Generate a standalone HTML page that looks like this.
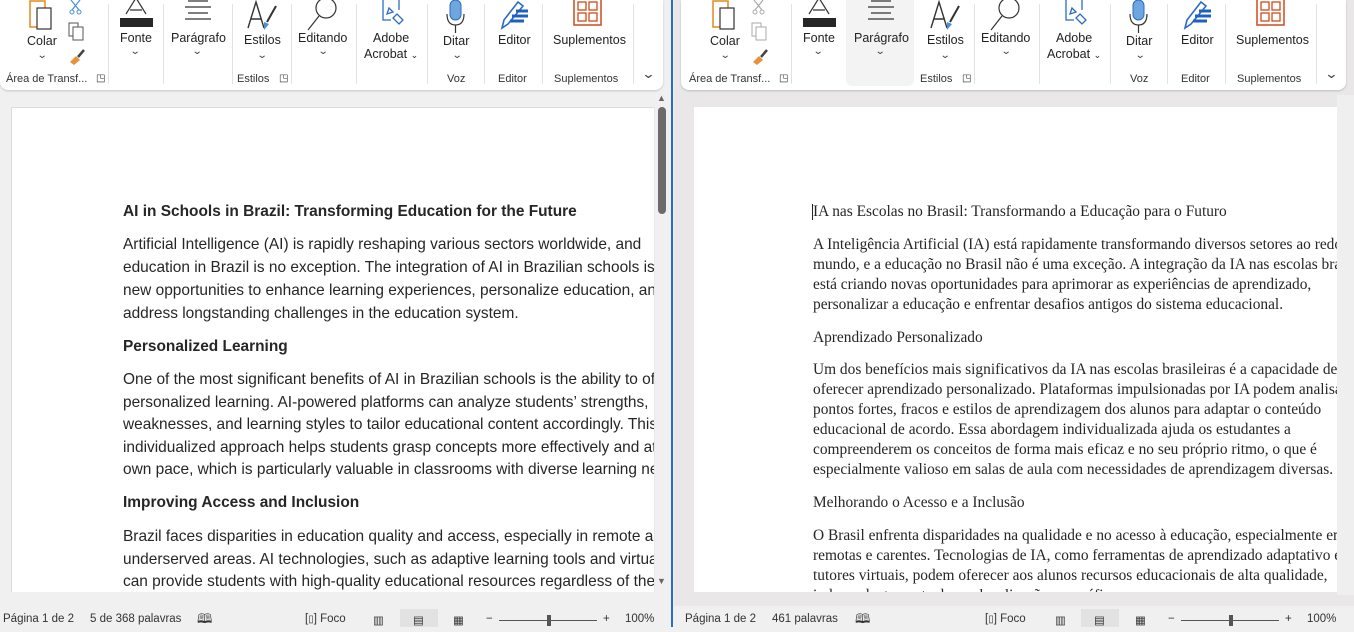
<!DOCTYPE html>
<html><head><meta charset="utf-8"><style>
*{margin:0;padding:0;box-sizing:border-box}
body{width:1354px;height:627px;overflow:hidden;position:relative;background:#f0f0f0;font-family:"Liberation Sans",sans-serif;color:#222}
.abs{position:absolute}
.rib{position:absolute;top:0;height:90px;background:#fff;border-radius:0 0 8px 8px;box-shadow:0 1px 2px rgba(0,0,0,.18)}
.lbl{position:absolute;font-size:12.5px;color:#222;white-space:nowrap}
.grp{position:absolute;font-size:11px;color:#333;top:73px;white-space:nowrap}
.sep{position:absolute;top:4px;width:1px;height:80px;background:#e2e2e2}
.chev{position:absolute;font-size:10px;color:#444;transform:scaleX(1.3)}
.page{position:absolute;top:107px;height:485px;background:#fff;overflow:hidden}
.l{position:absolute;white-space:nowrap}
.lp .l{font-family:"Liberation Sans",sans-serif;font-size:15.45px;color:#262626}
.rp .l{font-family:"Liberation Serif",serif;font-size:15.4px;color:#262626}
.st{position:absolute;top:613px;font-size:11.5px;color:#333;white-space:nowrap}
</style></head><body>
<div class="abs" style="left:674px;top:0;width:680px;height:627px;background:#e9e7e7"></div>
<div class="abs" style="left:1337px;top:95px;width:17px;height:500px;background:#efefef"></div>
<div class="abs" style="left:671px;top:0;width:2px;height:627px;background:#2b6cc4"></div>

<!-- LEFT RIBBON -->
<div class="rib" style="left:0;width:663px"></div>
<div class="abs" style="left:0;top:0;width:663px;height:90px">
 <svg class="abs" style="left:28px;top:0" width="26" height="32"><rect x="2" y="1" width="15" height="26" fill="#fff" stroke="#e08a1e" stroke-width="1.5"/><rect x="9" y="8" width="14" height="21" fill="#fff" stroke="#333" stroke-width="1.2"/></svg>
 <div class="lbl" style="left:27px;top:34px">Colar</div><div class="chev" style="left:38px;top:50px">⌄</div>
 <svg class="abs" style="left:68px;top:0" width="16" height="16"><path d="M3 0 L11 10 M12 0 L4 10" stroke="#4a90d9" stroke-width="1.2" fill="none"/><circle cx="4" cy="12" r="2" stroke="#4a90d9" fill="none"/><circle cx="11" cy="12" r="2" stroke="#4a90d9" fill="none"/></svg>
 <svg class="abs" style="left:68px;top:22px" width="18" height="20"><rect x="1" y="1" width="9" height="13" fill="#fff" stroke="#555"/><rect x="5" y="5" width="10" height="13" fill="#fff" stroke="#555"/></svg>
 <svg class="abs" style="left:68px;top:47px" width="20" height="20"><path d="M2 15 L8 9 L12 13 L6 18Z" fill="#e8913a"/><path d="M10 10 L16 3" stroke="#444" stroke-width="2.5"/></svg>
 <div class="grp" style="left:6px">Área de Transf...</div><div class="grp" style="left:96px;font-size:10px">◳</div>
 <div class="sep" style="left:108px"></div>
 <svg class="abs" style="left:119px;top:0" width="36" height="27"><path d="M7 14 L17 -2 L27 14 M11 10 H23" stroke="#333" fill="none" stroke-width="1.2"/><rect x="1" y="18" width="33" height="9" fill="#262626"/></svg>
 <div class="lbl" style="left:120px;top:31px">Fonte</div><div class="chev" style="left:131px;top:46px">⌄</div>
 <div class="sep" style="left:163px"></div>
 <svg class="abs" style="left:183px;top:0" width="30" height="22"><path d="M5 1H25M2 7H28M5 13H25M2 19H28" stroke="#333" stroke-width="1.2"/></svg>
 <div class="lbl" style="left:171px;top:31px">Parágrafo</div><div class="chev" style="left:193px;top:46px">⌄</div>
 <div class="sep" style="left:232px"></div>
 <svg class="abs" style="left:246px;top:0" width="34" height="32"><path d="M2 28 L10 2 L18 28 M5 19 H15" stroke="#333" fill="none" stroke-width="1.4"/><path d="M30 6 L21 22" stroke="#333" stroke-width="2"/><path d="M18 22 L23 24 L18 30Z" fill="#4a90d9"/></svg>
 <div class="lbl" style="left:244px;top:33px">Estilos</div><div class="chev" style="left:258px;top:50px">⌄</div>
 <div class="grp" style="left:237px">Estilos</div><div class="grp" style="left:279px;font-size:10px">◳</div>
 <div class="sep" style="left:291px"></div>
 <svg class="abs" style="left:306px;top:0" width="34" height="32"><circle cx="20" cy="8" r="10" fill="none" stroke="#333" stroke-width="1.2"/><path d="M13 16 L2 30" stroke="#333" stroke-width="1.2"/></svg>
 <div class="lbl" style="left:298px;top:31px">Editando</div><div class="chev" style="left:319px;top:46px">⌄</div>
 <div class="sep" style="left:356px"></div>
 <svg class="abs" style="left:379px;top:0" width="28" height="32"><path d="M4 0 V20 H12 M20 0 V10" stroke="#2b6cc4" fill="none" stroke-width="1.3"/><path d="M10 8 L14 12 L8 14Z M14 18 l6 6 l4 -4 l-6 -6z" stroke="#2b6cc4" fill="none" stroke-width="1.3"/></svg>
 <div class="lbl" style="left:373px;top:31px">Adobe</div>
 <div class="lbl" style="left:364px;top:47px">Acrobat <span style="font-size:9px">⌄</span></div>
 <div class="sep" style="left:427px"></div>
 <svg class="abs" style="left:445px;top:0" width="22" height="34"><rect x="5" y="0" width="11" height="20" rx="5.5" fill="#6ea6e0" stroke="#2b6cc4"/><path d="M2 14 Q2 25 10.5 25 Q19 25 19 14 M10.5 25 V33" stroke="#333" fill="none" stroke-width="1.2"/></svg>
 <div class="lbl" style="left:443px;top:34px">Ditar</div><div class="chev" style="left:453px;top:50px">⌄</div>
 <div class="grp" style="left:447px">Voz</div>
 <div class="sep" style="left:484px"></div>
 <svg class="abs" style="left:498px;top:0" width="32" height="30"><path d="M4 28 L6 20 L20 2 L25 6 L10 24Z" stroke="#2b6cc4" fill="none" stroke-width="1.6"/><path d="M14 16 H30 M18 11 H30 M12 21 H26" stroke="#1f5fbf" stroke-width="3"/></svg>
 <div class="lbl" style="left:498px;top:33px">Editor</div>
 <div class="grp" style="left:498px">Editor</div>
 <div class="sep" style="left:542px"></div>
 <svg class="abs" style="left:573px;top:0" width="30" height="26"><rect x="1" y="-2" width="27" height="27" fill="none" stroke="#d04a1c" stroke-width="1.5"/><rect x="5" y="2" width="8" height="8" fill="none" stroke="#d04a1c" stroke-width="1.3"/><rect x="16" y="2" width="8" height="8" fill="none" stroke="#d04a1c" stroke-width="1.3"/><rect x="5" y="13" width="8" height="8" fill="none" stroke="#d04a1c" stroke-width="1.3"/><rect x="16" y="13" width="8" height="8" fill="none" stroke="#d04a1c" stroke-width="1.3"/></svg>
 <div class="lbl" style="left:553px;top:33px">Suplementos</div>
 <div class="grp" style="left:554px">Suplementos</div>
 <div class="sep" style="left:633px"></div>
 <div class="chev" style="left:643px;top:66px;font-size:13px">⌄</div>
</div>

<!-- RIGHT RIBBON -->
<div class="rib" style="left:681px;width:665px"></div>
<div class="abs" style="left:846px;top:0;width:68px;height:86px;background:#f3f3f3;border-radius:0 0 6px 6px"></div>
<div class="abs" style="left:683px;top:0;width:663px;height:90px">
 <svg class="abs" style="left:28px;top:0" width="26" height="32"><rect x="2" y="1" width="15" height="26" fill="#fff" stroke="#e08a1e" stroke-width="1.5"/><rect x="9" y="8" width="14" height="21" fill="#fff" stroke="#333" stroke-width="1.2"/></svg>
 <div class="lbl" style="left:27px;top:34px">Colar</div><div class="chev" style="left:38px;top:50px">⌄</div>
 <svg class="abs" style="left:68px;top:0" width="16" height="16"><path d="M3 0 L11 10 M12 0 L4 10" stroke="#aaa" stroke-width="1.2" fill="none"/><circle cx="4" cy="12" r="2" stroke="#aaa" fill="none"/><circle cx="11" cy="12" r="2" stroke="#aaa" fill="none"/></svg>
 <svg class="abs" style="left:68px;top:22px" width="18" height="20"><rect x="1" y="1" width="9" height="13" fill="#fff" stroke="#aaa"/><rect x="5" y="5" width="10" height="13" fill="#fff" stroke="#aaa"/></svg>
 <svg class="abs" style="left:68px;top:47px" width="20" height="20"><path d="M2 15 L8 9 L12 13 L6 18Z" fill="#e8913a"/><path d="M10 10 L16 3" stroke="#444" stroke-width="2.5"/></svg>
 <div class="grp" style="left:6px">Área de Transf...</div><div class="grp" style="left:96px;font-size:10px">◳</div>
 <div class="sep" style="left:108px"></div>
 <svg class="abs" style="left:119px;top:0" width="36" height="27"><path d="M7 14 L17 -2 L27 14 M11 10 H23" stroke="#333" fill="none" stroke-width="1.2"/><rect x="1" y="18" width="33" height="9" fill="#262626"/></svg>
 <div class="lbl" style="left:120px;top:31px">Fonte</div><div class="chev" style="left:131px;top:46px">⌄</div>
 <svg class="abs" style="left:183px;top:0" width="30" height="22"><path d="M5 1H25M2 7H28M5 13H25M2 19H28" stroke="#333" stroke-width="1.2"/></svg>
 <div class="lbl" style="left:171px;top:31px">Parágrafo</div><div class="chev" style="left:193px;top:46px">⌄</div>
 <svg class="abs" style="left:246px;top:0" width="34" height="32"><path d="M2 28 L10 2 L18 28 M5 19 H15" stroke="#333" fill="none" stroke-width="1.4"/><path d="M30 6 L21 22" stroke="#333" stroke-width="2"/><path d="M18 22 L23 24 L18 30Z" fill="#4a90d9"/></svg>
 <div class="lbl" style="left:244px;top:33px">Estilos</div><div class="chev" style="left:258px;top:50px">⌄</div>
 <div class="grp" style="left:237px">Estilos</div><div class="grp" style="left:279px;font-size:10px">◳</div>
 <div class="sep" style="left:291px"></div>
 <svg class="abs" style="left:306px;top:0" width="34" height="32"><circle cx="20" cy="8" r="10" fill="none" stroke="#333" stroke-width="1.2"/><path d="M13 16 L2 30" stroke="#333" stroke-width="1.2"/></svg>
 <div class="lbl" style="left:298px;top:31px">Editando</div><div class="chev" style="left:319px;top:46px">⌄</div>
 <div class="sep" style="left:356px"></div>
 <svg class="abs" style="left:379px;top:0" width="28" height="32"><path d="M4 0 V20 H12 M20 0 V10" stroke="#2b6cc4" fill="none" stroke-width="1.3"/><path d="M10 8 L14 12 L8 14Z M14 18 l6 6 l4 -4 l-6 -6z" stroke="#2b6cc4" fill="none" stroke-width="1.3"/></svg>
 <div class="lbl" style="left:373px;top:31px">Adobe</div>
 <div class="lbl" style="left:364px;top:47px">Acrobat <span style="font-size:9px">⌄</span></div>
 <div class="sep" style="left:427px"></div>
 <svg class="abs" style="left:445px;top:0" width="22" height="34"><rect x="5" y="0" width="11" height="20" rx="5.5" fill="#6ea6e0" stroke="#2b6cc4"/><path d="M2 14 Q2 25 10.5 25 Q19 25 19 14 M10.5 25 V33" stroke="#333" fill="none" stroke-width="1.2"/></svg>
 <div class="lbl" style="left:443px;top:34px">Ditar</div><div class="chev" style="left:453px;top:50px">⌄</div>
 <div class="grp" style="left:447px">Voz</div>
 <div class="sep" style="left:484px"></div>
 <svg class="abs" style="left:498px;top:0" width="32" height="30"><path d="M4 28 L6 20 L20 2 L25 6 L10 24Z" stroke="#2b6cc4" fill="none" stroke-width="1.6"/><path d="M14 16 H30 M18 11 H30 M12 21 H26" stroke="#1f5fbf" stroke-width="3"/></svg>
 <div class="lbl" style="left:498px;top:33px">Editor</div>
 <div class="grp" style="left:498px">Editor</div>
 <div class="sep" style="left:542px"></div>
 <svg class="abs" style="left:573px;top:0" width="30" height="26"><rect x="1" y="-2" width="27" height="27" fill="none" stroke="#d04a1c" stroke-width="1.5"/><rect x="5" y="2" width="8" height="8" fill="none" stroke="#d04a1c" stroke-width="1.3"/><rect x="16" y="2" width="8" height="8" fill="none" stroke="#d04a1c" stroke-width="1.3"/><rect x="5" y="13" width="8" height="8" fill="none" stroke="#d04a1c" stroke-width="1.3"/><rect x="16" y="13" width="8" height="8" fill="none" stroke="#d04a1c" stroke-width="1.3"/></svg>
 <div class="lbl" style="left:553px;top:33px">Suplementos</div>
 <div class="grp" style="left:554px">Suplementos</div>
 <div class="sep" style="left:633px"></div>
 <div class="chev" style="left:643px;top:66px;font-size:13px">⌄</div>
</div>

<!-- LEFT PAGE -->
<div class="page lp" style="left:11px;width:644px;border:1px solid #dcdcdc;border-bottom:none">
 <div class="l" style="left:111px;top:95px;font-weight:bold">AI in Schools in Brazil: Transforming Education for the Future</div>
 <div class="l" style="left:111px;top:128px">Artificial Intelligence (AI) is rapidly reshaping various sectors worldwide, and</div>
 <div class="l" style="left:111px;top:151px">education in Brazil is no exception. The integration of AI in Brazilian schools is opening</div>
 <div class="l" style="left:111px;top:174px">new opportunities to enhance learning experiences, personalize education, and</div>
 <div class="l" style="left:111px;top:197px">address longstanding challenges in the education system.</div>
 <div class="l" style="left:111px;top:230px;font-weight:bold">Personalized Learning</div>
 <div class="l" style="left:111px;top:263px">One of the most significant benefits of AI in Brazilian schools is the ability to offer</div>
 <div class="l" style="left:111px;top:286px">personalized learning. AI-powered platforms can analyze students’ strengths,</div>
 <div class="l" style="left:111px;top:308px">weaknesses, and learning styles to tailor educational content accordingly. This</div>
 <div class="l" style="left:111px;top:331px">individualized approach helps students grasp concepts more effectively and at their</div>
 <div class="l" style="left:111px;top:353px">own pace, which is particularly valuable in classrooms with diverse learning needs.</div>
 <div class="l" style="left:111px;top:386px;font-weight:bold">Improving Access and Inclusion</div>
 <div class="l" style="left:111px;top:420px">Brazil faces disparities in education quality and access, especially in remote and</div>
 <div class="l" style="left:111px;top:443px">underserved areas. AI technologies, such as adaptive learning tools and virtual tutors,</div>
 <div class="l" style="left:111px;top:465px">can provide students with high-quality educational resources regardless of their</div>
</div>
<div class="abs" style="left:654px;top:92px;width:16px;height:500px;background:linear-gradient(to right,rgba(240,240,240,.6),#f0f0f0)"></div>
<div class="abs" style="left:658px;top:107px;width:8px;height:107px;background:#6b6b6b;border-radius:4px"></div>
<div class="abs" style="left:657px;top:93px;font-size:9px;color:#666">▲</div>
<div class="abs" style="left:657px;top:576px;font-size:9px;color:#666">▼</div>

<!-- RIGHT PAGE -->
<div class="page rp" style="left:694px;width:643px">
 <div class="abs" style="left:118px;top:97px;width:1px;height:16px;background:#222"></div>
 <div class="l" style="left:119px;top:96px">IA nas Escolas no Brasil: Transformando a Educação para o Futuro</div>
 <div class="l" style="left:119px;top:129px">A Inteligência Artificial (IA) está rapidamente transformando diversos setores ao redor do</div>
 <div class="l" style="left:119px;top:149px">mundo, e a educação no Brasil não é uma exceção. A integração da IA nas escolas brasileiras</div>
 <div class="l" style="left:119px;top:169px">está criando novas oportunidades para aprimorar as experiências de aprendizado,</div>
 <div class="l" style="left:119px;top:189px">personalizar a educação e enfrentar desafios antigos do sistema educacional.</div>
 <div class="l" style="left:119px;top:222px">Aprendizado Personalizado</div>
 <div class="l" style="left:119px;top:254px">Um dos benefícios mais significativos da IA nas escolas brasileiras é a capacidade de</div>
 <div class="l" style="left:119px;top:274px">oferecer aprendizado personalizado. Plataformas impulsionadas por IA podem analisar os</div>
 <div class="l" style="left:119px;top:294px">pontos fortes, fracos e estilos de aprendizagem dos alunos para adaptar o conteúdo</div>
 <div class="l" style="left:119px;top:314px">educacional de acordo. Essa abordagem individualizada ajuda os estudantes a</div>
 <div class="l" style="left:119px;top:334px">compreenderem os conceitos de forma mais eficaz e no seu próprio ritmo, o que é</div>
 <div class="l" style="left:119px;top:354px">especialmente valioso em salas de aula com necessidades de aprendizagem diversas.</div>
 <div class="l" style="left:119px;top:387px">Melhorando o Acesso e a Inclusão</div>
 <div class="l" style="left:119px;top:420px">O Brasil enfrenta disparidades na qualidade e no acesso à educação, especialmente em áreas</div>
 <div class="l" style="left:119px;top:440px">remotas e carentes. Tecnologias de IA, como ferramentas de aprendizado adaptativo e</div>
 <div class="l" style="left:119px;top:460px">tutores virtuais, podem oferecer aos alunos recursos educacionais de alta qualidade,</div>
 <div class="l" style="left:119px;top:480px">independentemente de sua localização geográfica.</div>
</div>

<!-- STATUS BARS -->
<div class="abs" style="left:0;top:606px;width:671px;height:21px;background:#f0f0f0"></div>
<div class="abs" style="left:674px;top:606px;width:680px;height:21px;background:#f0f0f0"></div>
<div class="st" style="left:3px">Página 1 de 2</div>
<div class="st" style="left:90px">5 de 368 palavras</div>
<div class="st" style="left:197px;font-size:13px;top:610px">🕮</div>
<div class="st" style="left:305px">[<span style="font-size:10px">▯</span>] Foco</div>
<div class="abs" style="left:400px;top:609px;width:38px;height:18px;background:#e2e2e2"></div>
<div class="st" style="left:373px">▥</div><div class="st" style="left:413px">▤</div><div class="st" style="left:453px">▦</div>
<div class="st" style="left:486px">−</div>
<div class="abs" style="left:499px;top:620px;width:98px;height:1px;background:#555"></div>
<div class="abs" style="left:547px;top:615px;width:4px;height:11px;background:#555"></div>
<div class="st" style="left:603px">+</div>
<div class="st" style="left:625px">100%</div>

<div class="st" style="left:685px">Página 1 de 2</div>
<div class="st" style="left:772px">461 palavras</div>
<div class="st" style="left:855px;font-size:13px;top:610px">🕮</div>
<div class="st" style="left:985px">[<span style="font-size:10px">▯</span>] Foco</div>
<div class="abs" style="left:1081px;top:609px;width:38px;height:18px;background:#e2e2e2"></div>
<div class="st" style="left:1055px">▥</div><div class="st" style="left:1094px">▤</div><div class="st" style="left:1135px">▦</div>
<div class="st" style="left:1168px">−</div>
<div class="abs" style="left:1181px;top:620px;width:98px;height:1px;background:#555"></div>
<div class="abs" style="left:1229px;top:615px;width:4px;height:11px;background:#555"></div>
<div class="st" style="left:1285px">+</div>
<div class="st" style="left:1307px">100%</div>
</body></html>
